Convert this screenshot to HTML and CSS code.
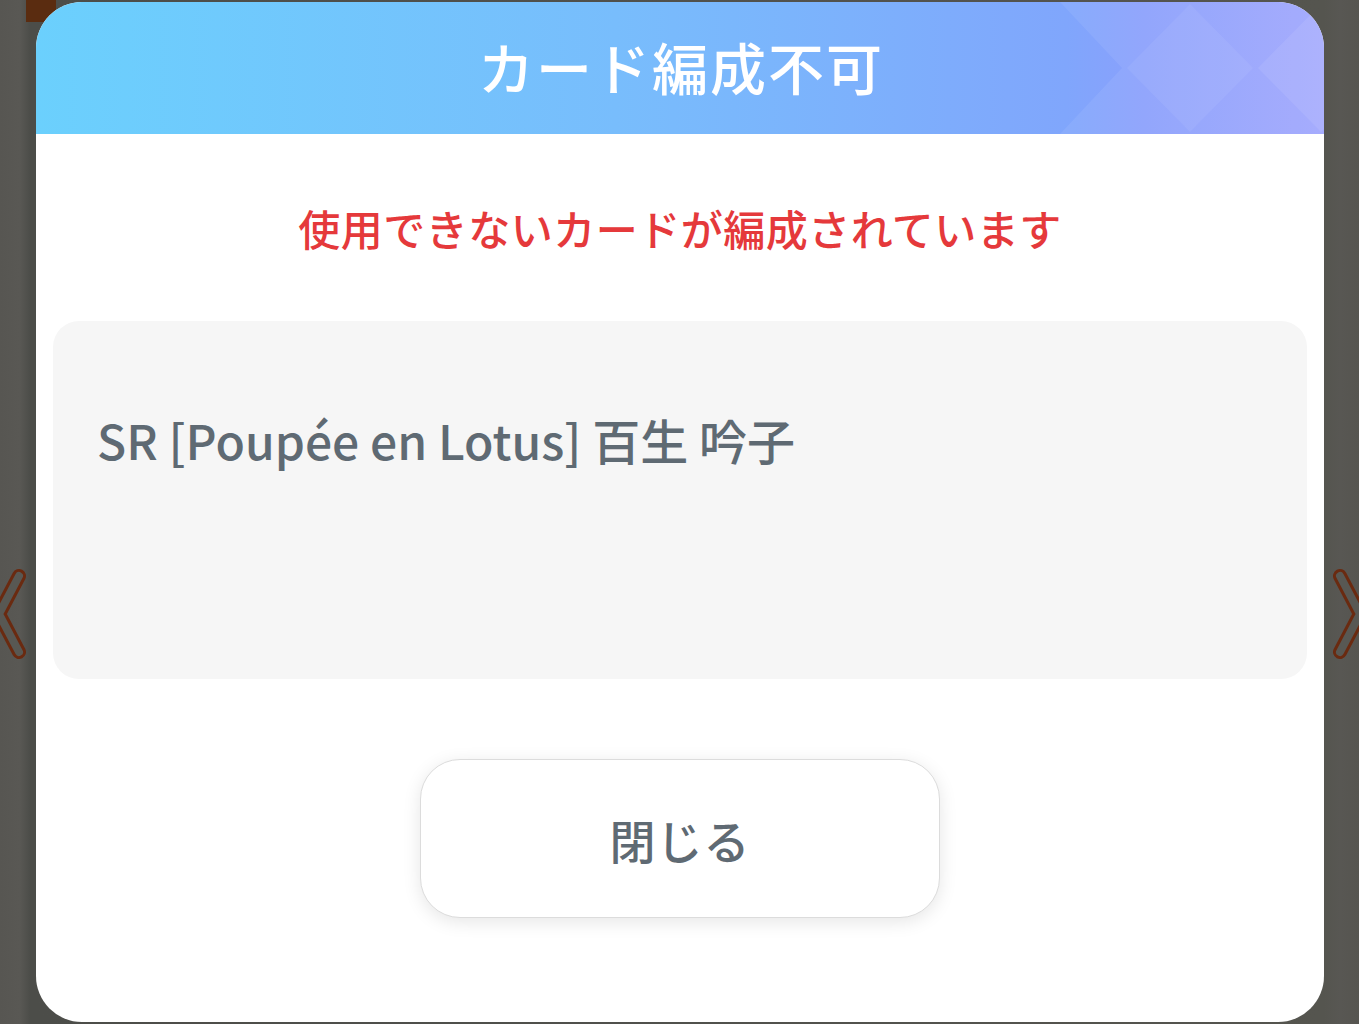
FILE: index.html
```html
<!DOCTYPE html>
<html lang="ja">
<head>
<meta charset="utf-8">
<title>カード編成不可</title>
<link rel="stylesheet" href="styles.css">
</head>
<body>
<div class="stage">
  <div class="corner-bit"></div>
  <svg class="nav nav-left" width="32" height="94" viewBox="0 0 32 94">
    <path d="M23 9 L3 47 L23 85" fill="none" stroke="#6a2a10" stroke-width="14" stroke-linecap="round" stroke-linejoin="round"/>
    <path d="M23 9 L3 47 L23 85" fill="none" stroke="#585853" stroke-width="8" stroke-linecap="round" stroke-linejoin="round"/>
  </svg>
  <svg class="nav nav-right" width="32" height="94" viewBox="0 0 32 94">
    <path d="M9 9 L29 47 L9 85" fill="none" stroke="#6a2a10" stroke-width="14" stroke-linecap="round" stroke-linejoin="round"/>
    <path d="M9 9 L29 47 L9 85" fill="none" stroke="#585853" stroke-width="8" stroke-linecap="round" stroke-linejoin="round"/>
  </svg>
  <div class="dialog">
    <div class="dialog-header">
      <svg class="header-pattern" width="270" height="132" viewBox="0 0 270 132">
        <polygon points="6,0 68,66 6,132 270,132 270,0" fill="#ffffff" fill-opacity="0.07"/>
        <polygon points="136,2 199,66 136,130 73,66" fill="#ffffff" fill-opacity="0.06"/>
        <polygon points="267,2 330,66 267,130 204,66" fill="#ffffff" fill-opacity="0.08"/>
      </svg>
      <h1 class="dialog-title">カード編成不可</h1>
    </div>
    <p class="dialog-message">使用できないカードが編成されています</p>
    <div class="card-list">
      <p class="card-item">SR [Poupée en Lotus] 百生 吟子</p>
    </div>
    <div class="actions">
      <button class="close-button" type="button">閉じる</button>
    </div>
  </div>
</div>
</body>
</html>
```

FILE: styles.css
```css
html, body {
  margin: 0;
  padding: 0;
}

body {
  width: 1359px;
  height: 1024px;
  overflow: hidden;
  background: #3e3f3c;
  font-family: "Noto Sans CJK JP", "Noto Sans", sans-serif;
}

.stage {
  position: relative;
  width: 1359px;
  height: 1024px;
  background: linear-gradient(90deg, #575652 0px, #595854 20px, #4c4d49 30px, #4c4d49 36px, #55554f 1324px, #585753 1340px, #565550 1359px);
  padding-top: 2px;
  box-sizing: border-box;
}

.corner-bit {
  position: absolute;
  left: 26px;
  top: 0;
  width: 30px;
  height: 22px;
  background: #5a2c10;
}

.nav {
  position: absolute;
  top: 567px;
}

.nav-left {
  left: -4px;
}

.nav-right {
  right: -4px;
}

.dialog {
  position: relative;
  margin-left: 36px;
  width: 1288px;
  height: 1020px;
  background: #ffffff;
  border-radius: 46px;
  overflow: hidden;
  display: flex;
  flex-direction: column;
}

.dialog-header {
  position: relative;
  height: 132px;
  flex: none;
  background: linear-gradient(90deg, #6bd0fd 0%, #78bdfc 45%, #80a6fc 80%, #8aa0fc 86%, #a0a6fd 100%);
  display: flex;
  align-items: center;
  justify-content: center;
}

.header-pattern {
  position: absolute;
  right: 0;
  top: 0;
}

.dialog-title {
  position: relative;
  margin: 0;
  font-size: 56px;
  font-weight: 500;
  letter-spacing: 2px;
  color: #ffffff;
  line-height: 1;
  padding-left: 2px;
  padding-bottom: 4px;
}

.dialog-message {
  margin: 69px 0 0;
  text-align: center;
  font-size: 42px;
  line-height: 50px;
  font-weight: 500;
  color: #e5393b;
  letter-spacing: 0.5px;
}

.card-list {
  margin: 68px 17px 0;
  height: 358px;
  box-sizing: border-box;
  background: #f6f6f6;
  border-radius: 26px;
  padding: 88px 44px 0;
}

.card-item {
  margin: 0;
  font-size: 48px;
  line-height: 60px;
  color: #5f6a73;
  font-weight: 500;
}

.actions {
  margin-top: 80px;
  display: flex;
  justify-content: center;
}

.close-button {
  width: 520px;
  height: 159px;
  background: #ffffff;
  border: 1px solid #dcdcdc;
  border-radius: 40px;
  box-shadow: 0 4px 18px rgba(0, 0, 0, 0.10);
  font-family: "Noto Sans CJK JP", sans-serif;
  font-size: 46px;
  font-weight: 500;
  color: #5f6a73;
  letter-spacing: 1px;
  padding: 0;
  cursor: pointer;
}
```
